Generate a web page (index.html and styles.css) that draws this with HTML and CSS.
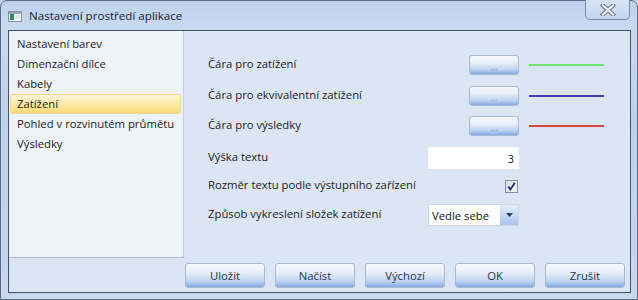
FILE: index.html
```html
<!DOCTYPE html>
<html lang="cs">
<head>
<meta charset="utf-8">
<title>Nastavení prostředí aplikace</title>
<link rel="stylesheet" href="styles.css">
</head>
<body>
<div class="window">
  <div class="titlebar">
    <svg class="app-icon" width="14" height="11" viewBox="0 0 14 11">
      <rect x="0.5" y="0.5" width="13" height="10" fill="#f4f6f8" stroke="#8a949e"/>
      <rect x="1" y="1" width="13" height="2" fill="#9aa6b2"/>
      <rect x="2" y="3" width="4" height="6" fill="#2f8a6c"/>
      <rect x="7" y="4" width="5" height="4" fill="#dfe5ea"/>
    </svg>
    <span class="title">Nastavení prostředí aplikace</span>
    <div class="close">
      <svg width="16" height="12" viewBox="0 0 16 12">
        <path d="M3 1.5 L13 10.5 M13 1.5 L3 10.5" stroke="#5f6f86" stroke-width="4.2" stroke-linecap="square"/>
        <path d="M3 1.5 L13 10.5 M13 1.5 L3 10.5" stroke="#ffffff" stroke-width="2.2" stroke-linecap="square"/>
      </svg>
    </div>
  </div>
  <div class="client">
    <ul class="nav">
      <li class="nav-item">Nastavení barev</li>
      <li class="nav-item">Dimenzační dílce</li>
      <li class="nav-item">Kabely</li>
      <li class="nav-item selected">Zatížení</li>
      <li class="nav-item">Pohled v rozvinutém průmětu</li>
      <li class="nav-item">Výsledky</li>
    </ul>
    <div class="settings">
      <div class="row row-a">
        <span class="label">Čára pro zatížení</span>
        <button class="btn dots">...</button>
        <span class="swatch green"></span>
      </div>
      <div class="row row-b">
        <span class="label">Čára pro ekvivalentní zatížení</span>
        <button class="btn dots">...</button>
        <span class="swatch blue"></span>
      </div>
      <div class="row row-a">
        <span class="label">Čára pro výsledky</span>
        <button class="btn dots">...</button>
        <span class="swatch red"></span>
      </div>
      <div class="row row-c">
        <span class="label">Výška textu</span>
        <div class="textbox">3</div>
      </div>
      <div class="row row-d">
        <span class="label">Rozměr textu podle výstupního zařízení</span>
        <span class="checkbox">
          <svg width="9" height="9" viewBox="0 0 9 9">
            <path d="M1.2 4.6 L3.4 7.4 L7.8 0.8" fill="none" stroke="#1f2e66" stroke-width="1.8"/>
          </svg>
        </span>
      </div>
      <div class="row row-e">
        <span class="label">Způsob vykreslení složek zatížení</span>
        <div class="combo">
          <span class="combo-text">Vedle sebe</span>
          <span class="combo-arrow">
            <svg width="7" height="4" viewBox="0 0 7 4"><path d="M0 0 H7 L3.5 4 Z" fill="#2a3a5a"/></svg>
          </span>
        </div>
      </div>
    </div>
    <div class="footer">
      <button class="btn action">Uložit</button>
      <button class="btn action">Načíst</button>
      <button class="btn action">Výchozí</button>
      <button class="btn action">OK</button>
      <button class="btn action">Zrušit</button>
    </div>
  </div>
</div>
</body>
</html>
```
FILE: styles.css
```css
html, body {
  margin: 0;
  padding: 0;
}
body {
  width: 638px;
  height: 300px;
  overflow: hidden;
  background: #c2d5ec;
  font-family: "Open Sans", "Noto Sans", sans-serif;
  font-size: 11.3px;
  color: #1b1b1b;
}
.window {
  box-sizing: border-box;
  height: 300px;
  border: 1px solid #5d6b7e;
  border-radius: 7px 7px 0 0;
  background: linear-gradient(to bottom, #bfd3ee 0px, #c8daf0 28px, #bcd1ec 120px, #c7d8ee 300px);
  padding: 0 6px 6px 7px;
  display: flex;
  flex-direction: column;
}
.titlebar {
  height: 29px;
  display: flex;
  align-items: center;
  flex: none;
}
.app-icon {
  margin-top: 1px;
  margin-right: 7px;
  flex: none;
}
.title {
  color: #1a2230;
  font-size: 11.6px;
  margin-top: -1px;
}
.close {
  margin-left: auto;
  margin-right: 1px;
  align-self: flex-start;
  margin-top: -1px;
  box-sizing: border-box;
  width: 45px;
  height: 20px;
  border: 1px solid #7a8aa0;
  border-top: none;
  border-radius: 0 0 5px 5px;
  background: linear-gradient(to bottom, #d6e3f3, #c4d6ee);
  display: flex;
  align-items: center;
  justify-content: center;
}
.client {
  flex: 1;
  border: 1px solid #42526a;
  background: #dbe6f4;
  display: grid;
  grid-template-columns: 175px 1fr;
  grid-template-rows: 227px 1fr;
}
.nav {
  list-style: none;
  margin: 0;
  padding: 3px 0 0 0;
  box-sizing: border-box;
  background: #eef3fa;
  border-right: 1px solid #c3cfe0;
  border-bottom: 1px solid #aebdd2;
}
.nav-item {
  height: 20px;
  line-height: 20px;
  margin: 0 2px 0 1px;
  padding-left: 7px;
  box-sizing: border-box;
  white-space: nowrap;
}
.nav-item.selected {
  border: 1px solid #f3d88f;
  border-radius: 2px;
  line-height: 18px;
  padding-left: 6px;
  background: linear-gradient(to bottom, #fef6d8 0%, #fde9a8 50%, #fbd978 100%);
}
.settings {
  padding: 19px 26px 0 24px;
  display: flex;
  flex-direction: column;
}
.row {
  display: grid;
  grid-template-columns: 1fr 91px 75px;
  column-gap: 10px;
  align-items: center;
}
.row-a { height: 30px; }
.row-b { height: 31px; }
.row-c { height: 34px; }
.row-d { height: 22px; }
.row-e { height: 36px; }
.label {
  white-space: nowrap;
  margin-top: -3px;
}
.btn {
  font-family: inherit;
  margin: 0;
  padding: 0;
  box-sizing: border-box;
  border: 1px solid #a9b9d0;
  border-radius: 3px;
  background: linear-gradient(to bottom, #f6f9fd 0%, #e6eef9 40%, #bcd2f1 75%, #86ace6 100%);
  cursor: default;
}
.dots {
  justify-self: end;
  width: 50px;
  height: 20px;
  font-size: 9px;
  color: #7f94b8;
  line-height: 14px;
  padding-top: 4px;
}
.swatch {
  height: 2px;
  width: 75px;
}
.swatch.green { background: #6ee26e; }
.swatch.blue { background: #4141b4; }
.swatch.red { background: #dc4444; }
.textbox {
  box-sizing: border-box;
  height: 22px;
  background: #ffffff;
  text-align: right;
  padding: 4px 5px 0 0;
  font-size: 11px;
}
.checkbox {
  grid-column: 2;
  justify-self: end;
  margin-right: 1px;
  box-sizing: border-box;
  width: 13px;
  height: 13px;
  border: 1px solid #8e8f8f;
  background: linear-gradient(135deg, #d3dbe8, #f6f7f8);
  display: flex;
  align-items: center;
  justify-content: center;
}
.combo {
  grid-column: 2;
  box-sizing: border-box;
  height: 22px;
  background: #ffffff;
  border: 1px solid #cdd7e4;
  display: flex;
  align-items: stretch;
  font-size: 11.3px;
}
.combo-text {
  flex: 1;
  padding-left: 3px;
  line-height: 21px;
  color: #111;
}
.combo-arrow {
  width: 18px;
  background: linear-gradient(to bottom, #e4ecf8, #a9c4ee);
  display: flex;
  align-items: center;
  justify-content: center;
}
.footer {
  grid-column: 1 / -1;
  display: flex;
  justify-content: flex-end;
  gap: 10px;
  padding: 5px 5px 0 0;
}
.action {
  width: 80px;
  height: 25px;
  font-size: 11.3px;
  color: #2c3850;
}
```
